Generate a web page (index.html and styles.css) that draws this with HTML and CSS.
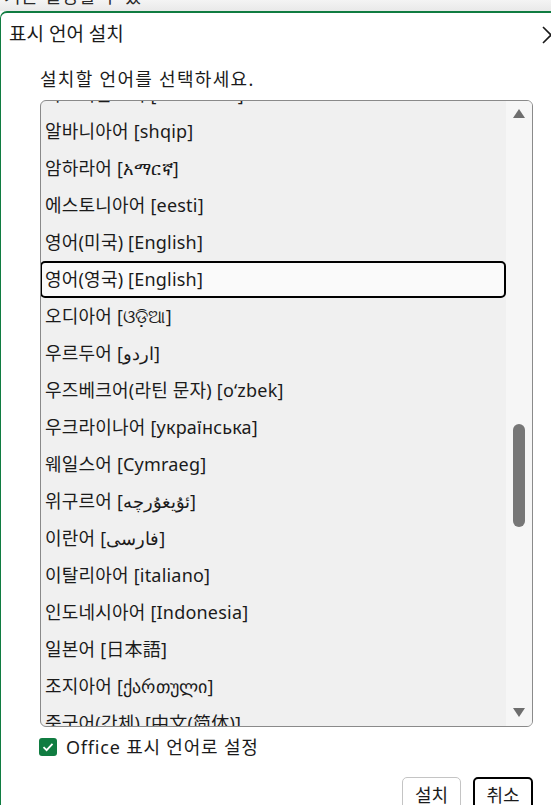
FILE: index.html
```html
<!DOCTYPE html>
<html lang="ko">
<head>
  <meta charset="UTF-8" />
  <meta name="viewport" content="width=device-width, initial-scale=1.0"/>
  <title>표시 언어 설치</title>
  <link rel="stylesheet" href="styles.css">
</head>
<body>

  <!-- Window behind the dialog -->
  <div class="behind">
    <span>기는 설정할 수 있</span>
  </div>

  <!-- Dialog -->
  <div class="dialog">
    <div class="dialog-header">
      <h1>표시 언어 설치</h1>
      <svg class="close" width="20" height="20" viewBox="0 0 20 20">
        <path d="M2 2 L18 18 M18 2 L2 18" stroke="#1a1a1a" stroke-width="1.6" fill="none"/>
      </svg>
    </div>

    <div class="dialog-body">
      <p class="prompt">설치할 언어를 선택하세요.</p>

      <div class="listbox">
        <div class="rows">
          <ul class="lang-list">
            <li>아프리칸스어 [Afrikaans]</li>
            <li>알바니아어 [shqip]</li>
            <li>암하라어 [አማርኛ]</li>
            <li>에스토니아어 [eesti]</li>
            <li>영어(미국) [English]</li>
            <li class="selected">영어(영국) [English]</li>
            <li>오디아어 [ଓଡ଼ିଆ]</li>
            <li>우르두어 [<bdi>اردو</bdi>]</li>
            <li>우즈베크어(라틴 문자) [o‘zbek]</li>
            <li>우크라이나어 [українська]</li>
            <li>웨일스어 [Cymraeg]</li>
            <li>위구르어 [<bdi>ئۇيغۇرچە</bdi>]</li>
            <li>이란어 [<bdi>فارسی</bdi>]</li>
            <li>이탈리아어 [italiano]</li>
            <li>인도네시아어 [Indonesia]</li>
            <li>일본어 [日本語]</li>
            <li>조지아어 [ქართული]</li>
            <li>중국어(간체) [中文(简体)]</li>
          </ul>
        </div>
        <div class="scrollbar">
          <span class="arrow up"></span>
          <div class="track">
            <div class="thumb"></div>
          </div>
          <span class="arrow down"></span>
        </div>
      </div>

      <label class="check-row">
        <span class="checkbox">
          <svg width="12" height="10" viewBox="0 0 12 10">
            <path d="M1.5 5.2 L4.6 8.2 L10.5 1.8" stroke="white" stroke-width="1.8" fill="none"/>
          </svg>
        </span>
        Office 표시 언어로 설정
      </label>

      <div class="buttons">
        <button class="btn">설치</button>
        <button class="btn primary">취소</button>
      </div>
    </div>
  </div>

</body>
</html>
```

FILE: styles.css
```css
/* General */
body {
  margin: 0;
  font-family: 'Noto Sans', 'Noto Sans CJK KR', sans-serif;
  color: #1b1b1b;
  background: #ffffff;
  overflow: hidden;
}

/* Window behind */
.behind {
  height: 11px;
  overflow: hidden;
  background: linear-gradient(to bottom, #f4f4f4, #e9e9e9);
  padding-left: 4px;
}

.behind span {
  display: block;
  margin-top: -15px;
  font-size: 18px;
  line-height: 22px;
  letter-spacing: 0.8px;
  color: #2a2a2a;
}

/* Dialog */
.dialog {
  background: white;
  border-top: 2px solid #107c41;
  border-left: 1px solid #107c41;
  border-top-left-radius: 7px;
  height: 820px;
}

.dialog-header {
  display: flex;
  justify-content: space-between;
  align-items: center;
  padding: 8px 0 0 8px;
  margin-right: -10px;
}

.dialog-header h1 {
  margin: 0;
  font-size: 19px;
  font-weight: normal;
  line-height: 26px;
}

.close {
  margin-top: 2px;
}

.dialog-body {
  padding-left: 39px;
  padding-right: 18px;
}

.prompt {
  margin: 19px 0 0;
  font-size: 18px;
  letter-spacing: 1.3px;
  line-height: 26px;
}

/* List box */
.listbox {
  display: flex;
  margin-top: 8px;
  height: 625px;
  border: 1px solid #8a8a8a;
  border-radius: 6px;
  background: #f0f0f0;
  overflow: hidden;
}

.rows {
  flex: 1;
  overflow: hidden;
}

.lang-list {
  list-style: none;
  margin: -25px 0 0;
  padding: 0;
}

.lang-list li {
  height: 37px;
  box-sizing: border-box;
  padding-left: 4px;
  font-size: 18px;
  letter-spacing: 0.2px;
  line-height: 37px;
  white-space: nowrap;
}

.lang-list li.selected {
  margin-left: -1px;
  padding-left: 3px;
  border: 2px solid #000;
  border-radius: 5px;
  background: #fafafa;
  line-height: 33px;
}

/* Scrollbar */
.scrollbar {
  width: 26px;
  background: #f6f6f6;
  display: flex;
  flex-direction: column;
  align-items: center;
  padding: 8px 0 9px;
}

.arrow {
  width: 0;
  height: 0;
  border-left: 6.5px solid transparent;
  border-right: 6.5px solid transparent;
}

.arrow.up {
  border-bottom: 9px solid #6e6e6e;
}

.arrow.down {
  border-top: 9px solid #6e6e6e;
}

.track {
  flex: 1;
}

.thumb {
  width: 12px;
  height: 103px;
  margin-top: 306px;
  border-radius: 6px;
  background: #777777;
}

/* Checkbox */
.check-row {
  display: flex;
  align-items: center;
  gap: 9px;
  margin-top: 9px;
  font-size: 18px;
  letter-spacing: 0.8px;
  line-height: 22px;
}

.checkbox {
  width: 18px;
  height: 18px;
  border-radius: 3px;
  background: #107c41;
  display: flex;
  align-items: center;
  justify-content: center;
  margin-left: -1px;
}

/* Buttons */
.buttons {
  display: flex;
  justify-content: flex-end;
  gap: 12px;
  margin-top: 19px;
}

.btn {
  width: 59px;
  height: 34px;
  box-sizing: border-box;
  font-family: inherit;
  font-size: 18px;
  color: #1b1b1b;
  background: white;
  border: 1px solid #c4c4c4;
  border-radius: 5px;
  padding: 0;
}

.btn.primary {
  width: 60px;
  border: 2px solid #000;
}
```
